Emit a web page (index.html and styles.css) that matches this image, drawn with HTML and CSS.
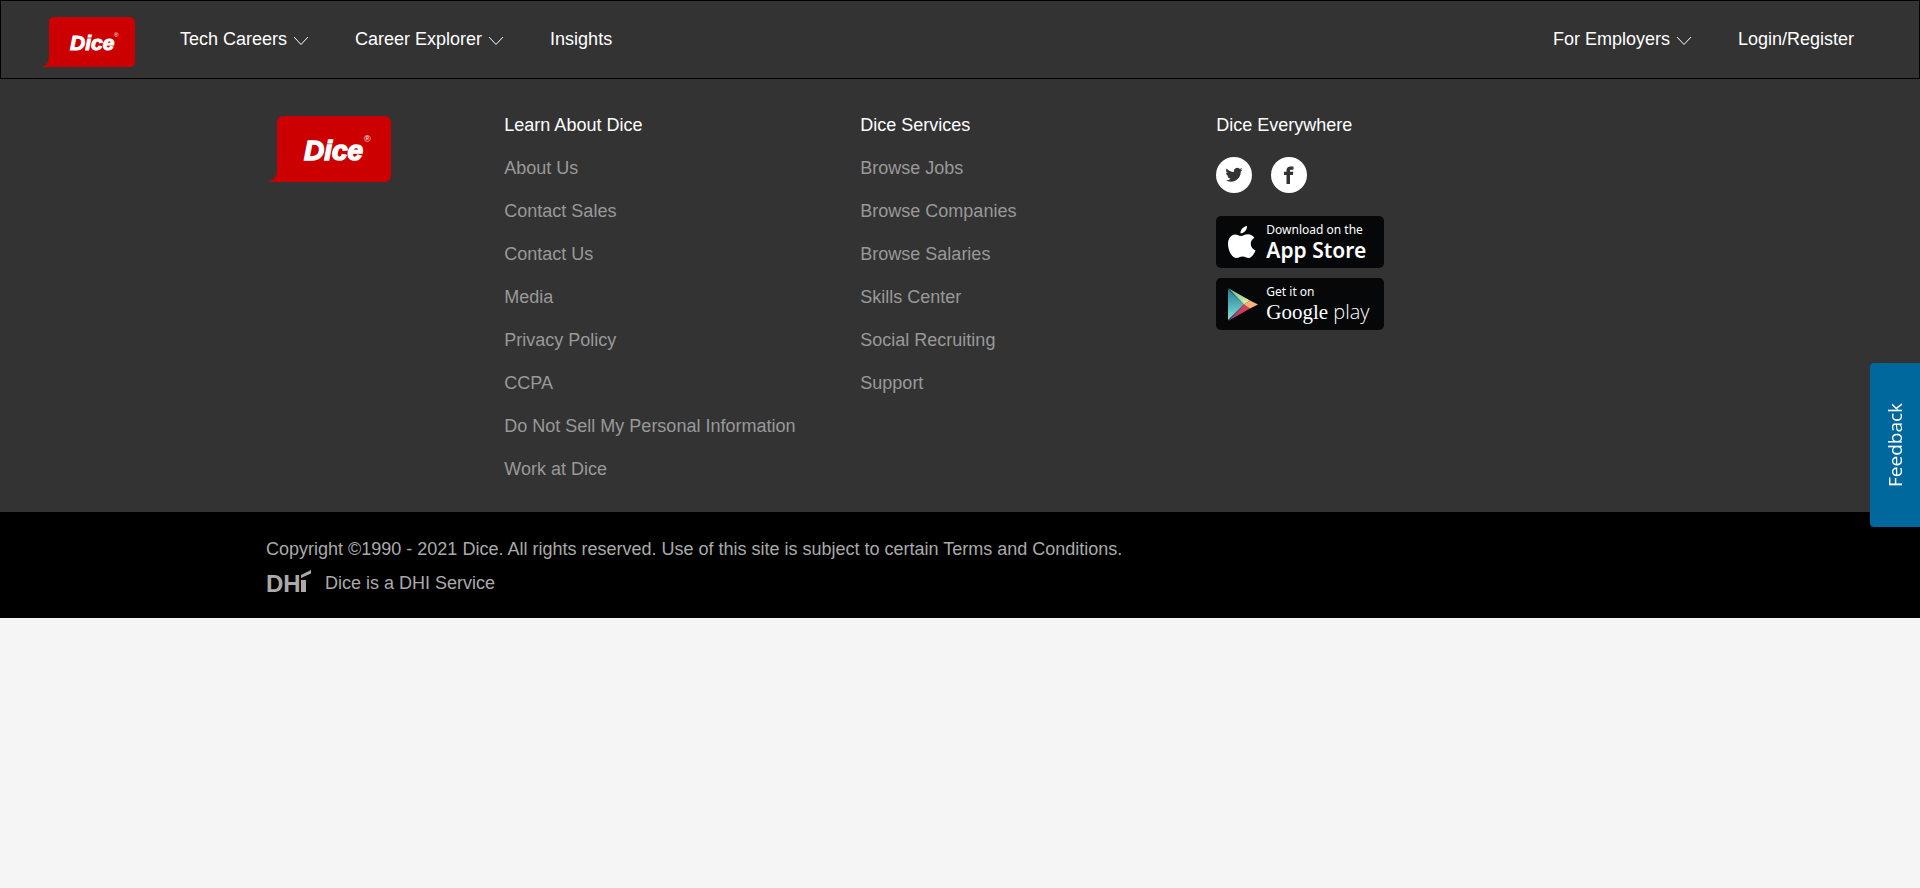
FILE: index.html
```html
<!DOCTYPE html>
<html lang="en">
<head>
<meta charset="utf-8">
<title>Dice</title>
<meta name="viewport" content="width=device-width, initial-scale=1">
<link rel="stylesheet" href="styles.css">
</head>
<body>
<header class="header">
  <a class="brand" href="#" aria-label="Dice home">
    <svg width="94" height="50" viewBox="0 0 94 50">
      <path fill="#c00" d="M13 0H89A5 5 0 0 1 94 5V45A5 5 0 0 1 89 50H0C5 49 8 45 8 40V5A5 5 0 0 1 13 0Z"/>
      <text class="logo-text" x="29" y="33" font-size="21" stroke-width="1">Dice</text>
      <text class="logo-reg" x="73" y="20" font-size="6">®</text>
    </svg>
  </a>
  <nav class="nav">
    <button class="nav-item" type="button">Tech Careers
      <svg class="chevron" width="16" height="10" viewBox="0 0 16 10"><path d="M1 1l7 7.500 7-7.500"/></svg></button>
    <button class="nav-item" type="button">Career Explorer
      <svg class="chevron" width="16" height="10" viewBox="0 0 16 10"><path d="M1 1l7 7.500 7-7.500"/></svg></button>
    <a class="nav-item" href="#">Insights</a>
  </nav>
  <nav class="nav nav-right">
    <button class="nav-item" type="button">For Employers
      <svg class="chevron" width="16" height="10" viewBox="0 0 16 10"><path d="M1 1l7 7.500 7-7.500"/></svg></button>
    <a class="nav-item" href="#">Login/Register</a>
  </nav>
</header>

<footer>
  <div class="footer-main">
    <div class="footer-grid">
      <a class="footer-logo" href="#" aria-label="Dice">
        <svg width="125" height="66" viewBox="0 0 125 66">
          <path fill="#c00" d="M17 0H118A6 6 0 0 1 124 6V60A6 6 0 0 1 118 66H1C7 64 10 60 10 54V6A6 6 0 0 1 16 0Z"/>
          <text class="logo-text" x="37" y="44" font-size="28" stroke-width="1.400">Dice</text>
          <text class="logo-reg" x="97" y="26" font-size="9">®</text>
        </svg>
      </a>
      <section>
        <h2 class="col-title">Learn About Dice</h2>
        <ul class="links">
          <li><a href="#">About Us</a></li>
          <li><a href="#">Contact Sales</a></li>
          <li><a href="#">Contact Us</a></li>
          <li><a href="#">Media</a></li>
          <li><a href="#">Privacy Policy</a></li>
          <li><a href="#">CCPA</a></li>
          <li><a href="#">Do Not Sell My Personal Information</a></li>
          <li><a href="#">Work at Dice</a></li>
        </ul>
      </section>
      <section>
        <h2 class="col-title">Dice Services</h2>
        <ul class="links">
          <li><a href="#">Browse Jobs</a></li>
          <li><a href="#">Browse Companies</a></li>
          <li><a href="#">Browse Salaries</a></li>
          <li><a href="#">Skills Center</a></li>
          <li><a href="#">Social Recruiting</a></li>
          <li><a href="#">Support</a></li>
        </ul>
      </section>
      <section>
        <h2 class="col-title">Dice Everywhere</h2>
        <div class="social">
          <a href="#" aria-label="Twitter"><svg width="36" height="36" viewBox="0 0 36 36">
            <circle cx="18" cy="18" r="18" fill="#fff"/>
            <g transform="translate(9.500 9.200) scale(.71)"><path fill="#333" d="M23.950 4.570a10 10 0 0 1-2.820.770 4.960 4.960 0 0 0 2.160-2.720c-.950.550-2 .950-3.130 1.180a4.920 4.920 0 0 0-8.380 4.480C7.690 8.090 4.070 6.130 1.640 3.160a4.920 4.920 0 0 0 1.520 6.570 4.900 4.900 0 0 1-2.230-.610v.060a4.920 4.920 0 0 0 3.950 4.830 5 5 0 0 1-2.210.080 4.940 4.940 0 0 0 4.600 3.420A9.870 9.870 0 0 1 0 19.540a14 14 0 0 0 7.550 2.210c9.050 0 14-7.500 14-13.980 0-.210 0-.420-.020-.630a9.940 9.940 0 0 0 2.460-2.550z"/></g>
          </svg></a>
          <a href="#" aria-label="Facebook"><svg width="36" height="36" viewBox="0 0 36 36">
            <circle cx="18" cy="18" r="18" fill="#fff"/>
            <path fill="#333" d="M15.500 27V18H13v-3.200h2.500v-1.600C15.500 11.200 17 9.500 19.500 9.500H22.500v3.200H20.400c-1 0-1.400.5-1.400 1.300v.8H22.300L21.900 18H19v9z"/>
          </svg></a>
        </div>
        <div class="badges">
          <a class="badge" href="#">
            <svg width="31" height="33" viewBox="0 0 31 33"><path fill="#fff" d="M20 0c.3 3.600-3 7.500-6.500 7.300C13.200 3.800 16.500.4 20 0zM7.800 8.500c2.800 0 4 1.500 6.200 1.500s3.800-1.700 7-1.700c2.500 0 4.900 1.300 6.400 3.500-5.500 3.300-4.500 10.500 1.100 12.800-1.300 3.300-4 7.400-6.900 7.400-2.500 0-3.200-1.500-6-1.500-2.900 0-3.700 1.500-6 1.500C5 32 1 24.500 1 18.200 1 12 4.600 8.500 7.800 8.500z"/></svg>
            <span class="badge-text"><span class="badge-small">Download on the</span><span class="badge-big">App Store</span></span>
          </a>
          <a class="badge" href="#">
            <svg width="31" height="33" viewBox="0 0 31 33">
              <defs><linearGradient id="playBlue" x1="0" y1="0" x2="0" y2="1"><stop offset="0" stop-color="#267d9c"/><stop offset="1" stop-color="#7ee3d8"/></linearGradient>
              <linearGradient id="playGreen" x1="0" y1="0" x2="1" y2="1"><stop offset="0" stop-color="#59b7a2"/><stop offset="1" stop-color="#f0f5a0"/></linearGradient>
              <linearGradient id="playRed" x1="0" y1="1" x2="1" y2="0"><stop offset="0" stop-color="#8a4591"/><stop offset="1" stop-color="#ec3a48"/></linearGradient></defs>
              <path fill="url(#playBlue)" d="M1 1L17 16.500 1 32z"/>
              <path fill="url(#playGreen)" d="M1 0L23 12.500 17 16.500z"/>
              <path fill="url(#playRed)" d="M1 33L17 16.500 23 20.500z"/>
              <path fill="#fcb27b" d="M23 12.500L31 16.500 23 20.500 17 16.500z"/>
            </svg>
            <span class="badge-text"><span class="badge-small">Get it on</span><span class="play-name"><span class="google">Google</span> play</span></span>
          </a>
        </div>
      </section>
    </div>
  </div>
  <div class="legal">
    <div class="legal-inner">
      <p>Copyright ©1990 - 2021 Dice. All rights reserved. Use of this site is subject to certain <a href="#">Terms and Conditions.</a></p>
      <p class="dhi">
        <svg width="46" height="27" viewBox="0 0 46 27" role="img" aria-label="DHI">
          <text class="dhi-text" x="0" y="22">DH</text>
          <path fill="#aaa" d="M35 10h5v12h-5zM35 8V5L45 0v3.500z"/>
        </svg>
        <a href="#">Dice is a DHI Service</a>
      </p>
    </div>
  </div>
</footer>
<button class="feedback" type="button">Feedback</button>
</body>
</html>
```
FILE: styles.css
```css
* { box-sizing: border-box; }

body {
  margin: 0;
  background: #f5f5f5;
  font: 18px/27px "Liberation Sans", Arial, sans-serif;
}

a { color: inherit; text-decoration: none; }
svg { display: block; flex: none; overflow: visible; }

.header {
  display: flex;
  align-items: center;
  padding: 16px 65px 11px 40px;
  border: 1px solid #000;
  background: #333;
}

.nav { display: flex; gap: 46px; margin-left: 45px; padding-bottom: 5px; }
.nav-right { margin-left: auto; }

.nav-item {
  display: flex;
  align-items: center;
  gap: 6px;
  padding: 0;
  border: 0;
  background: none;
  color: #fff;
  font: inherit;
  cursor: pointer;
}

.chevron { margin-top: 3px; fill: none; stroke: #fff; stroke-width: 1; }

.logo-text {
  font-family: "Liberation Sans", Arial, sans-serif;
  font-weight: 700;
  font-style: italic;
  fill: #fff;
  stroke: #fff;
}
.logo-reg { font-family: "Liberation Sans", Arial, sans-serif; fill: #fff; }

.footer-main { padding: 33px 0 29px; background: #333; }

.footer-grid {
  display: grid;
  grid-template-columns: 2fr 3fr 3fr 4fr;
  max-width: 1424px;
  margin: 0 auto;
}
.footer-grid > * { padding-left: 19px; }
.footer-logo { padding-top: 4px; }

.col-title { margin: 0 0 16px; color: #fff; font: inherit; }

.links { margin: 0; padding: 0; list-style: none; color: #999; }
.links li + li { margin-top: 16px; }

.social { display: flex; gap: 19px; margin-top: 18px; }

.badges { display: flex; flex-direction: column; align-items: flex-start; gap: 10px; margin-top: 23px; }

.badge {
  display: flex;
  align-items: center;
  gap: 8px;
  width: 168px;
  height: 52px;
  padding-left: 11px;
  border-radius: 5px;
  background: #060708;
  color: #fff;
  font-family: "Noto Sans", "Open Sans", sans-serif;
}
.badge-text { display: flex; flex-direction: column; white-space: nowrap; }
.badge-small { font-size: 12px; line-height: 16px; }
.badge-big { font-size: 21px; line-height: 24px; font-weight: 600; }
.play-name { font: 300 20px/24px "Open Sans", sans-serif; }
.google { font: 21px/24px "Liberation Serif", serif; }

.legal { padding: 24px 0 21px; background: #000; color: #aaa; }
.legal-inner { max-width: 1388px; margin: 0 auto; }
.legal p { margin: 0; }
.legal .dhi { display: flex; align-items: center; gap: 13px; margin-top: 7px; }
.dhi-text { font: 700 24px "Liberation Sans", Arial, sans-serif; fill: #aaa; }

.feedback {
  position: fixed;
  top: 363px;
  right: 0;
  padding: 40px 14px;
  border: 0;
  border-radius: 0 4px 4px 0;
  background: #00689d;
  color: #fff;
  font: 19px/22px "Open Sans", sans-serif;
  writing-mode: vertical-rl;
  transform: rotate(180deg);
  cursor: pointer;
}
```
